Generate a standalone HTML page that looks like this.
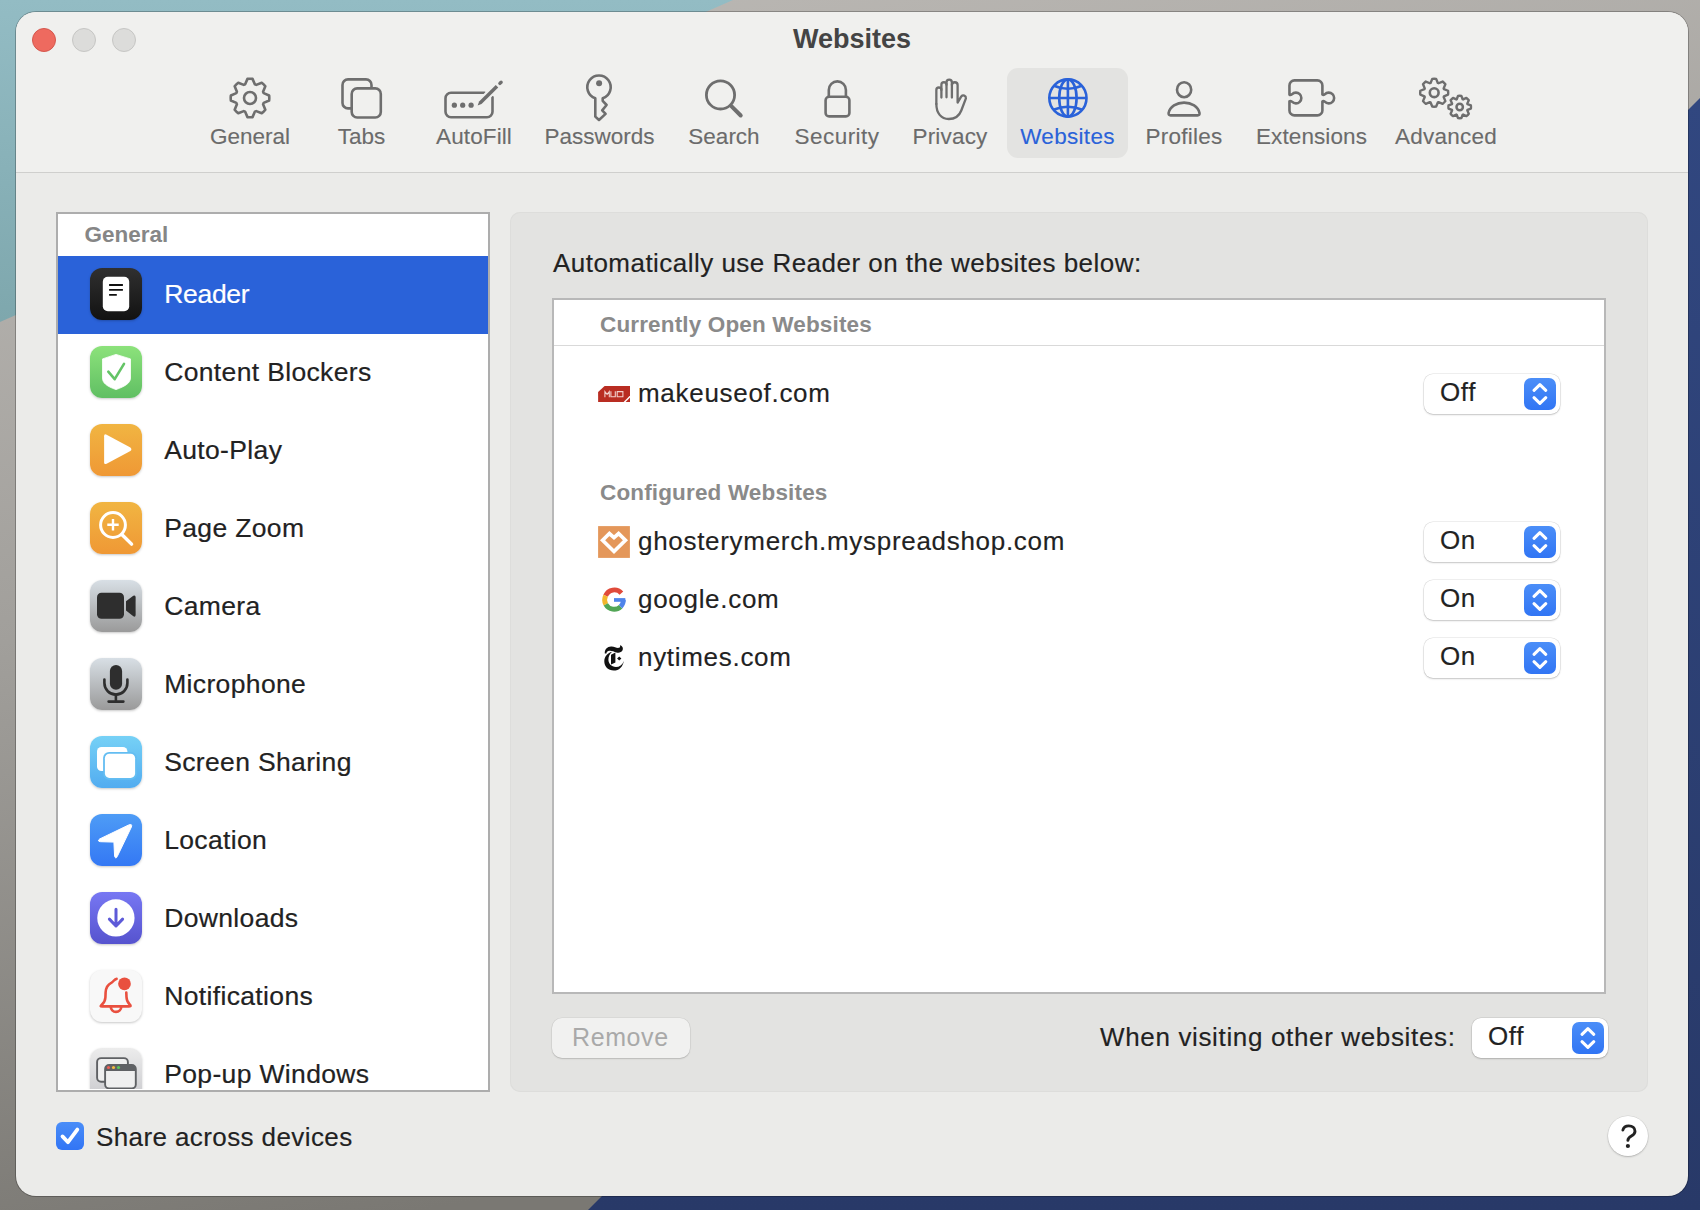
<!DOCTYPE html>
<html><head><meta charset="utf-8">
<style>
*{margin:0;padding:0;box-sizing:border-box}
html,body{width:1700px;height:1210px;overflow:hidden;background:#a5a39f}
body{position:relative;font-family:"Liberation Sans",sans-serif;}
.a{position:absolute}
.t{position:absolute;line-height:1;white-space:nowrap}
#bg{position:absolute;left:0;top:0}
#win{position:absolute;left:16px;top:12px;width:1672px;height:1184px;border-radius:20px;background:#ebebe9;overflow:hidden;box-shadow:0 0 0 1px rgba(0,0,0,0.25)}
#tb{position:absolute;left:0;top:0;width:1672px;height:161px;background:#f0f0ee;border-bottom:1px solid #cfcfcd}
.dot{position:absolute;width:24px;height:24px;border-radius:50%;top:28px}
.lbl{font-size:22.5px;color:#6b6b6b;text-align:center;width:160px;top:125.6px;-webkit-text-stroke:0.12px currentColor}
.side{font-size:26.5px;color:#222;letter-spacing:0.35px;-webkit-text-stroke:0.2px currentColor}
.ico{position:absolute;left:90px;width:52px;height:52px;border-radius:12px;box-shadow:0 1px 2.5px rgba(0,0,0,0.22)}
.site{font-size:26px;color:#222;letter-spacing:0.7px;-webkit-text-stroke:0.15px currentColor}
.pop{position:absolute;width:136px;height:40px;border-radius:9px;background:#fff;box-shadow:0 0 0 0.5px rgba(0,0,0,0.12),0 1px 2px rgba(0,0,0,0.18)}
.pop .st{position:absolute;right:4px;top:4px;width:32px;height:32px;border-radius:7px;background:linear-gradient(#4b8ef8,#3175f4)}
.pop .tx{position:absolute;left:16px;top:5.2px;font-size:26px;line-height:1;color:#222;letter-spacing:0.6px;-webkit-text-stroke:0.15px currentColor}
</style></head><body>
<svg id="bg" width="1700" height="1210">
  <defs>
    <linearGradient id="gg" x1="0" y1="0" x2="0.25" y2="1">
      <stop offset="0" stop-color="#bebbb7"/><stop offset="0.5" stop-color="#a19f9b"/><stop offset="1" stop-color="#7a7873"/>
    </linearGradient>
    <linearGradient id="tg" x1="0" y1="0" x2="0" y2="1">
      <stop offset="0" stop-color="#93bcc4"/><stop offset="1" stop-color="#7ea7ad"/>
    </linearGradient>
  <linearGradient id="bl" x1="0" y1="98" x2="0" y2="1210" gradientUnits="userSpaceOnUse">
      <stop offset="0" stop-color="#314780"/><stop offset="1" stop-color="#283968"/>
    </linearGradient>
  </defs>
  <rect width="1700" height="1210" fill="url(#gg)"/>
  <polygon points="0,0 733,0 0,322" fill="url(#tg)"/>
  <polygon points="588,1210 1700,98 1700,1210" fill="url(#bl)"/>
</svg>
<div id="win">
  <div id="tb"></div>
</div>
<!-- traffic lights -->
<div class="dot" style="left:32px;background:#ee6a5f;border:1px solid #d5574d"></div>
<div class="dot" style="left:72px;background:#dcdcda;border:1px solid #c6c6c4"></div>
<div class="dot" style="left:112px;background:#dcdcda;border:1px solid #c6c6c4"></div>
<div class="t" style="left:652px;width:400px;text-align:center;top:26.1px;font-size:27px;font-weight:bold;color:#444">Websites</div>

<!-- toolbar highlight -->
<div class="a" style="left:1007px;top:68px;width:121px;height:90px;border-radius:11px;background:#e3e3e1"></div>

<svg class="a" style="left:0;top:0" width="1700" height="180" viewBox="0 0 1700 180">
<g fill="none" stroke="#6e6e6e" stroke-width="2.6" stroke-linejoin="round" stroke-linecap="round">
<!-- General gear -->
<path d="M245.16 84.33 L247.48 78.87 A19.30 19.30 0 0 1 252.52 78.87 L254.84 84.33 A14.50 14.50 0 0 1 256.24 84.91 L261.75 82.69 A19.30 19.30 0 0 1 265.31 86.25 L263.09 91.76 A14.50 14.50 0 0 1 263.67 93.16 L269.13 95.48 A19.30 19.30 0 0 1 269.13 100.52 L263.67 102.84 A14.50 14.50 0 0 1 263.09 104.24 L265.31 109.75 A19.30 19.30 0 0 1 261.75 113.31 L256.24 111.09 A14.50 14.50 0 0 1 254.84 111.67 L252.52 117.13 A19.30 19.30 0 0 1 247.48 117.13 L245.16 111.67 A14.50 14.50 0 0 1 243.76 111.09 L238.25 113.31 A19.30 19.30 0 0 1 234.69 109.75 L236.91 104.24 A14.50 14.50 0 0 1 236.33 102.84 L230.87 100.52 A19.30 19.30 0 0 1 230.87 95.48 L236.33 93.16 A14.50 14.50 0 0 1 236.91 91.76 L234.69 86.25 A19.30 19.30 0 0 1 238.25 82.69 L243.76 84.91 A14.50 14.50 0 0 1 245.16 84.33 Z"/>
<circle cx="250" cy="98" r="6"/>
<!-- Tabs -->
<rect x="342.5" y="79.4" width="29" height="29" rx="5.5"/>
<rect x="351.7" y="88.4" width="29.1" height="29.1" rx="5.5" fill="#f0f0ee"/>
<!-- AutoFill -->
<path d="M484.4 92.8 H451 A5.5 5.5 0 0 0 445.5 98.3 V111.8 A5.5 5.5 0 0 0 451 117.3 H487 A5.5 5.5 0 0 0 492.5 111.8 V97.3"/>
<path d="M479 104 L498 85 M500.4 83.3 L501 82.7" stroke="#f0f0ee" stroke-width="7.5"/>
<path d="M477.6 105.5 L479.1 101.56 L495.77 84.96 L498.23 87.44 L481.53 104.04 Z" fill="#6e6e6e" stroke="none"/>
<path d="M499.9 83.4 L501.1 82.2" stroke-width="3.4"/>
<circle cx="454.35" cy="105.2" r="2.6" fill="#6e6e6e" stroke="none"/>
<circle cx="462.7" cy="105.2" r="2.6" fill="#6e6e6e" stroke="none"/>
<circle cx="471.1" cy="105.2" r="2.6" fill="#6e6e6e" stroke="none"/>
<!-- Passwords key -->
<path d="M595.3 98.3 A11.7 11.7 0 1 1 602.7 98.3 V100.8 L606.6 105 L602.2 110.3 L605.6 113.9 L599 120 L595.3 116.6 Z"/>
<circle cx="599.1" cy="83.2" r="3" fill="#6e6e6e" stroke="none"/>
<!-- Search -->
<circle cx="720.5" cy="94.9" r="14.1" stroke-width="2.8"/>
<path d="M731.6 106.4 L740.7 115.5" stroke-width="4"/>
<!-- Security lock -->
<rect x="825.6" y="96.8" width="23.8" height="19.6" rx="3.5"/>
<path d="M828.8 96.8 V89.9 A8.55 8.55 0 0 1 845.9 89.9 V96.8"/>
<!-- Privacy hand -->
<g transform="translate(922 70)" stroke-width="2.3">
<path d="M14.35 34 V20 A2.52 2.52 0 0 1 19.4 20 V27.6"/>
<path d="M19.4 20 V14.8 A2.55 2.55 0 0 1 24.5 14.8 V27.3"/>
<path d="M24.5 14.8 V12.4 A2.7 2.7 0 0 1 29.9 12.4 V27.5"/>
<path d="M29.9 15.1 A2.85 2.85 0 0 1 35.6 15.1 V32.6 L39.3 26.4 A2.6 2.6 0 0 1 43.9 28.3 L39.3 40.5 C37.2 46 32.6 49 26.8 49 C19 49 14.35 43 14.35 34"/>
</g>
<!-- Profiles -->
<ellipse cx="1184.1" cy="89.7" rx="7.1" ry="7.5"/>
<path d="M1170.6 115.4 H1197.6 Q1199.9 115.4 1199.5 112.9 C1198.2 106.6 1191.5 102.6 1184.05 102.6 C1176.6 102.6 1169.9 106.6 1168.6 112.9 Q1168.3 115.4 1170.6 115.4 Z"/>
<!-- Extensions puzzle -->
<path d="M1289.45 24.5" stroke="none"/>
<g transform="translate(1280 70)">
<path d="M9.45 24.6 V15.4 A5 5 0 0 1 14.45 10.35 H37.4 A5 5 0 0 1 42.4 15.4 V24.6 Q43.4 25.4 44.8 24.3 A5.4 5.4 0 1 1 44.8 31.7 Q43.4 30.6 42.4 31.4 V40.4 A5 5 0 0 1 37.4 45.4 H14.45 A5 5 0 0 1 9.45 40.4 V31.4 Q10.5 30.6 12 31.7 A5.4 5.4 0 1 0 12 24.3 Q10.5 25.4 9.45 24.6 Z"/>
</g>
<!-- Advanced gears -->
<path d="M1430.56 82.96 L1432.25 78.84 A14.00 14.00 0 0 1 1436.15 78.84 L1437.84 82.96 A10.40 10.40 0 0 1 1438.51 83.24 L1442.63 81.52 A14.00 14.00 0 0 1 1445.38 84.27 L1443.66 88.39 A10.40 10.40 0 0 1 1443.94 89.06 L1448.06 90.75 A14.00 14.00 0 0 1 1448.06 94.65 L1443.94 96.34 A10.40 10.40 0 0 1 1443.66 97.01 L1445.38 101.13 A14.00 14.00 0 0 1 1442.63 103.88 L1438.51 102.16 A10.40 10.40 0 0 1 1437.84 102.44 L1436.15 106.56 A14.00 14.00 0 0 1 1432.25 106.56 L1430.56 102.44 A10.40 10.40 0 0 1 1429.89 102.16 L1425.77 103.88 A14.00 14.00 0 0 1 1423.02 101.13 L1424.74 97.01 A10.40 10.40 0 0 1 1424.46 96.34 L1420.34 94.65 A14.00 14.00 0 0 1 1420.34 90.75 L1424.46 89.06 A10.40 10.40 0 0 1 1424.74 88.39 L1423.02 84.27 A14.00 14.00 0 0 1 1425.77 81.52 L1429.89 83.24 A10.40 10.40 0 0 1 1430.56 82.96 Z" stroke-width="2.4"/>
<circle cx="1434.2" cy="92.7" r="4.4" stroke-width="2.6"/>
<path d="M1456.73 99.25 L1458.03 95.82 A11.30 11.30 0 0 1 1461.37 95.82 L1462.67 99.25 A8.30 8.30 0 0 1 1463.08 99.42 L1466.42 97.92 A11.30 11.30 0 0 1 1468.78 100.28 L1467.28 103.62 A8.30 8.30 0 0 1 1467.45 104.03 L1470.88 105.33 A11.30 11.30 0 0 1 1470.88 108.67 L1467.45 109.97 A8.30 8.30 0 0 1 1467.28 110.38 L1468.78 113.72 A11.30 11.30 0 0 1 1466.42 116.08 L1463.08 114.58 A8.30 8.30 0 0 1 1462.67 114.75 L1461.37 118.18 A11.30 11.30 0 0 1 1458.03 118.18 L1456.73 114.75 A8.30 8.30 0 0 1 1456.32 114.58 L1452.98 116.08 A11.30 11.30 0 0 1 1450.62 113.72 L1452.12 110.38 A8.30 8.30 0 0 1 1451.95 109.97 L1448.52 108.67 A11.30 11.30 0 0 1 1448.52 105.33 L1451.95 104.03 A8.30 8.30 0 0 1 1452.12 103.62 L1450.62 100.28 A11.30 11.30 0 0 1 1452.98 97.92 L1456.32 99.42 A8.30 8.30 0 0 1 1456.73 99.25 Z" stroke-width="2.4"/>
<circle cx="1459.7" cy="107" r="3.2" stroke-width="2.5"/>
</g>
<!-- Websites globe -->
<g fill="none" stroke="#2a62d9" stroke-width="2.6">
<circle cx="1067.9" cy="98" r="18.6"/>
<ellipse cx="1067.9" cy="98" rx="8.7" ry="18.6"/>
<path d="M1067.9 79.4 V116.6 M1049.3 98 H1086.5"/>
<path d="M1053.9 85.7 Q1067.9 91.8 1081.9 85.7"/>
<path d="M1053.5 109.8 Q1067.9 103.8 1082.3 109.8"/>
</g>
</svg>
<!-- toolbar labels -->
<div class="t lbl" style="left:170px">General</div>
<div class="t lbl" style="left:281.5px">Tabs</div>
<div class="t lbl" style="left:394px;letter-spacing:0.12px">AutoFill</div>
<div class="t lbl" style="left:519.5px">Passwords</div>
<div class="t lbl" style="left:644px">Search</div>
<div class="t lbl" style="left:757px;letter-spacing:0.45px">Security</div>
<div class="t lbl" style="left:870px;letter-spacing:0.17px">Privacy</div>
<div class="t lbl" style="left:987.5px;color:#2a62d9;letter-spacing:0.3px">Websites</div>
<div class="t lbl" style="left:1104px;letter-spacing:0.25px">Profiles</div>
<div class="t lbl" style="left:1231.5px;letter-spacing:0.1px">Extensions</div>
<div class="t lbl" style="left:1366px;letter-spacing:0.25px">Advanced</div>

<!-- sidebar -->
<div class="a" style="left:56px;top:212px;width:434px;height:880px;background:#fff;border:2px solid #adadad"></div>
<div class="t" style="left:84.4px;top:224.2px;font-size:22.5px;font-weight:bold;color:#868686;letter-spacing:0px">General</div>
<div class="a" style="left:58px;top:256px;width:430px;height:78px;background:#2a62d9"></div>

<div class="a" style="left:58px;top:214px;width:430px;height:875px;overflow:hidden">
<div class="a" style="left:-58px;top:-214px;width:1700px;height:1210px">
<div class="ico" style="top:268px;background:linear-gradient(#303030,#121212)"><svg width="52" height="52" viewBox="0 0 52 52">
<rect x="12.8" y="8.8" width="26.4" height="34.4" rx="5" fill="#fff"/>
<path d="M19.1 17 H32.9 M19.1 21.9 H32.9 M19.1 26.9 H26.8" stroke="#111" stroke-width="1.9"/></svg></div>
<div class="ico" style="top:346px;background:linear-gradient(#8ce27b,#60bf63)"><svg width="52" height="52" viewBox="0 0 52 52">
<path d="M26 8.4 L40.5 12.9 V32 C40.5 36.8 35.6 40.2 26 43.6 C16.4 40.2 12.5 36.8 12.5 32 V12.9 Z" fill="#fff" stroke="#fff" stroke-width="0.8" stroke-linejoin="round"/>
<path d="M18.3 25.7 L24.7 33.2 L34 17.8" fill="none" stroke="#64c466" stroke-width="2.6" stroke-linecap="round" stroke-linejoin="round"/></svg></div>
<div class="ico" style="top:424px;background:linear-gradient(#f1b542,#ef9835)"><svg width="52" height="52" viewBox="0 0 52 52">
<path d="M14.1 12.2 Q14.1 9.4 16.6 10.7 L40.4 23.4 Q42.4 25.2 40.4 27 L16.6 39.7 Q14.1 41 14.1 38.2 Z" fill="#fff"/></svg></div>
<div class="ico" style="top:502px;background:linear-gradient(#f1b542,#ef9835)"><svg width="52" height="52" viewBox="0 0 52 52">
<circle cx="23" cy="23" r="12.4" fill="none" stroke="#fff" stroke-width="3"/>
<path d="M17.3 22.8 H28.7 M23 17.1 V28.5" stroke="#fff" stroke-width="2.4"/>
<path d="M32.6 33.2 L41.6 42.1" stroke="#fff" stroke-width="3.4" stroke-linecap="round"/></svg></div>
<div class="ico" style="top:580px;background:linear-gradient(#d8dfe5,#9a9a9a)"><svg width="52" height="52" viewBox="0 0 52 52">
<rect x="7" y="12.8" width="27" height="25.9" rx="4.5" fill="#2e2e2e"/>
<path d="M36 21.2 L43.3 15.8 Q45.6 14.6 45.6 17 V35 Q45.6 37.4 43.3 36.3 L36 30.5 Z" fill="#2e2e2e"/></svg></div>
<div class="ico" style="top:658px;background:linear-gradient(#d8dfe5,#9a9a9a)"><svg width="52" height="52" viewBox="0 0 52 52">
<rect x="19.9" y="7" width="12.2" height="24.8" rx="6.1" fill="#2e2e2e"/>
<path d="M14.4 21.5 V25.1 A11.5 11.5 0 0 0 37.4 25.1 V21.5" fill="none" stroke="#2e2e2e" stroke-width="2.6" stroke-linecap="round"/>
<path d="M25.9 36.6 V43.6 M18.6 43.6 H33.4" stroke="#2e2e2e" stroke-width="2.6" stroke-linecap="round"/></svg></div>
<div class="ico" style="top:736px;background:linear-gradient(#76d1f6,#52acf0)"><svg width="52" height="52" viewBox="0 0 52 52">
<rect x="7" y="10.9" width="30.4" height="24.1" rx="4.5" fill="#fff"/>
<rect x="13.1" y="16" width="33.8" height="27.7" rx="6" fill="#63bdf2"/>
<rect x="14.9" y="17.8" width="30.2" height="24.1" rx="4.5" fill="#fff"/></svg></div>
<div class="ico" style="top:814px;background:linear-gradient(#4e9cf6,#3478f4)"><svg width="52" height="52" viewBox="0 0 52 52">
<path d="M38.6 11 Q42.6 9.4 41.4 13 L27.2 42.6 Q25.6 45.6 24.6 42 L23.9 28.1 L10.4 27.7 Q6.8 27.2 9.6 25 Z" fill="#fff" stroke="#fff" stroke-width="1" stroke-linejoin="round"/></svg></div>
<div class="ico" style="top:892px;background:linear-gradient(#7777f3,#5653ce)"><svg width="52" height="52" viewBox="0 0 52 52">
<circle cx="25.9" cy="25.9" r="18.65" fill="#fff"/>
<path d="M26 17.3 V34 M19.4 27.1 L26 34 L32.6 27.1" fill="none" stroke="#5d5ad8" stroke-width="3" stroke-linecap="round" stroke-linejoin="round"/></svg></div>
<div class="ico" style="top:970px;background:#f8f8f8"><svg width="52" height="52" viewBox="0 0 52 52">
<g transform="translate(-6 -6)"><path d="M32.6 14.9 C30.2 15.1 29.8 17.4 27.6 18.6 C23.6 20.6 21.8 23.6 21.6 28.5 L21.4 33.5 C21.2 37 19.8 38.8 18 40.5 C15.8 42.5 16.5 42.4 18.5 42.4 H45 C47 42.4 47.3 42 45.3 40 C43.6 38.3 42.6 36.5 42.5 33 L42.3 28.6" fill="none" stroke="#e9503f" stroke-width="2.6" stroke-linecap="round" stroke-linejoin="round"/>
<path d="M26.7 42.6 A5.3 5.3 0 0 0 37.3 42.6" fill="none" stroke="#e9503f" stroke-width="2.6"/>
<circle cx="40.5" cy="19.8" r="6.35" fill="#e9503f"/></g></svg></div>
<div class="ico" style="top:1048px;background:linear-gradient(#ececec,#c9c9cd)"><svg width="52" height="52" viewBox="0 0 52 52">
<rect x="7.1" y="10.1" width="30.8" height="23.6" rx="4" fill="#efefef" stroke="#5f6164" stroke-width="1.9"/>
<rect x="15.1" y="16.9" width="30.7" height="23.6" rx="4" fill="#efefef" stroke="#5f6164" stroke-width="1.9"/>
<path d="M15.1 22.9 V21 A4 4 0 0 1 19.1 16.9 H41.8 A4 4 0 0 1 45.8 21 V22.9 Z" fill="#5f6164"/>
<circle cx="18.5" cy="19.5" r="1.6" fill="#ee5f55"/><circle cx="23.5" cy="19.5" r="1.6" fill="#f5bb3f"/><circle cx="28.5" cy="19.5" r="1.6" fill="#5ac85a"/></svg></div>
<div class="t side" style="left:164.2px;top:281.47px;color:#fff;letter-spacing:-0.3px">Reader</div>
<div class="t side" style="left:164.2px;top:359.47px;color:#222">Content Blockers</div>
<div class="t side" style="left:164.2px;top:437.47px;color:#222">Auto-Play</div>
<div class="t side" style="left:164.2px;top:515.47px;color:#222">Page Zoom</div>
<div class="t side" style="left:164.2px;top:593.47px;color:#222">Camera</div>
<div class="t side" style="left:164.2px;top:671.47px;color:#222">Microphone</div>
<div class="t side" style="left:164.2px;top:749.47px;color:#222">Screen Sharing</div>
<div class="t side" style="left:164.2px;top:827.47px;color:#222">Location</div>
<div class="t side" style="left:164.2px;top:905.47px;color:#222">Downloads</div>
<div class="t side" style="left:164.2px;top:983.47px;color:#222">Notifications</div>
<div class="t side" style="left:164.2px;top:1061.47px;color:#222">Pop-up Windows</div>
</div></div>
<!-- right panel -->
<div class="a" style="left:510px;top:212px;width:1138px;height:880px;border-radius:10px;background:#e3e3e1;box-shadow:inset 0 0 0 1px #dddddb"></div>
<div class="t site" style="left:553px;top:250.2px;letter-spacing:0.47px">Automatically use Reader on the websites below:</div>
<div class="a" style="left:552px;top:298px;width:1054px;height:696px;background:#fff;border:2px solid #b8b8b8"></div>
<div class="a" style="left:554px;top:345px;width:1050px;height:1px;background:#d9d9d9"></div>
<div class="t" style="left:600px;top:313.6px;font-size:22.5px;font-weight:bold;color:#8a8a8a;letter-spacing:0.15px">Currently Open Websites</div>
<div class="t" style="left:600px;top:481.6px;font-size:22.5px;font-weight:bold;color:#8a8a8a;letter-spacing:0.15px">Configured Websites</div>

<svg class="a" style="left:590px;top:375px" width="50" height="305" viewBox="590 375 50 305">
<!-- MUO -->
<path d="M598.1 392 L604.6 385.9 H630 V395.4 L623.6 401.9 H598.1 Z" fill="#b92d22"/>
<path d="M630 397.6 V401.9 H625.6 Z" fill="#b92d22"/>
<path d="M604.9 397.2 V391.6 L607.1 394.4 L609.3 391.6 V397.2 M610.9 391.3 V396.7 H615.3 V391.3 M617.2 391.6 H622.9 V396.7 H617.2 Z" fill="none" stroke="#f2cfcb" stroke-width="1.1"/>
<!-- ghostery -->
<rect x="598.1" y="526.1" width="31.8" height="31.8" fill="#e4975a"/>
<path d="M602.6 540.3 L609.4 533.5 L614 537.6 L618.6 533.5 L625.4 540.3 L614 551.5 Z" fill="none" stroke="#fff" stroke-width="3.7" stroke-linejoin="miter"/>
<!-- google -->
<g fill="none" stroke-width="4.9">
<path d="M621.4 593.1 A9.45 9.45 0 0 0 605.6 595.8" stroke="#e04a3a"/>
<path d="M605.6 595.8 A9.45 9.45 0 0 0 605.8 604.4" stroke="#f2b62c"/>
<path d="M605.8 604.4 A9.45 9.45 0 0 0 620.6 606.7" stroke="#52a656"/>
<path d="M620.6 606.7 A9.45 9.45 0 0 0 623.35 599.9" stroke="#4f84ea"/>
</g>
<rect x="614" y="598.1" width="11.3" height="3.7" fill="#4f84ea"/>
<!-- nyt -->
<g transform="translate(596 640)" fill="#111">
<path d="M8.8 13.6 C8.4 9.2 11.6 6.2 15.6 6.5 C18.6 6.8 21 8.4 23 7.8 C24 7.5 24.4 6.4 24 5.2 C26.6 5.8 27.6 8.4 26.4 10.6 C25.2 12.6 22.8 13 20.4 12.4 C18 11.8 15.8 10.6 13.4 10.8 C11.4 11 10.4 12 10.4 13.6 Z"/>
<path d="M16.2 11.8 C11 13 8.3 17 8.3 21.6 C8.3 26.6 12.2 30.6 17.8 30.6 C23 30.6 26.8 27 27.8 21 C26.4 25 23.4 27 20 27 C15.2 27 12.4 23.6 12.4 19.6 C12.4 16.4 13.8 13.8 16.2 11.8 Z"/>
<path d="M15 14.8 L19.4 12.6 V22.6 L15 24.4 Z"/>
<path d="M23.2 16.6 L25.4 18.6 L23.2 20.6 L21.1 18.6 Z"/>
</g>
</svg>
<div class="t site" style="left:638px;top:380px">makeuseof.com</div>
<div class="t site" style="left:638px;top:527.5px">ghosterymerch.myspreadshop.com</div>
<div class="t site" style="left:638px;top:586px">google.com</div>
<div class="t site" style="left:638px;top:643.5px">nytimes.com</div>

<div class="pop" style="left:1424px;top:374px"><div class="tx">Off</div><div class="st"><svg width="32" height="32" viewBox="0 0 32 32" style="position:absolute;left:0;top:0"><path d="M10 12.3 L15.9 6.7 L21.8 12.3 M10 19.7 L15.9 25.3 L21.8 19.7" fill="none" stroke="#fff" stroke-width="3.1" stroke-linecap="round" stroke-linejoin="round"/></svg></div></div>
<div class="pop" style="left:1424px;top:522px"><div class="tx">On</div><div class="st"><svg width="32" height="32" viewBox="0 0 32 32" style="position:absolute;left:0;top:0"><path d="M10 12.3 L15.9 6.7 L21.8 12.3 M10 19.7 L15.9 25.3 L21.8 19.7" fill="none" stroke="#fff" stroke-width="3.1" stroke-linecap="round" stroke-linejoin="round"/></svg></div></div>
<div class="pop" style="left:1424px;top:580px"><div class="tx">On</div><div class="st"><svg width="32" height="32" viewBox="0 0 32 32" style="position:absolute;left:0;top:0"><path d="M10 12.3 L15.9 6.7 L21.8 12.3 M10 19.7 L15.9 25.3 L21.8 19.7" fill="none" stroke="#fff" stroke-width="3.1" stroke-linecap="round" stroke-linejoin="round"/></svg></div></div>
<div class="pop" style="left:1424px;top:638px"><div class="tx">On</div><div class="st"><svg width="32" height="32" viewBox="0 0 32 32" style="position:absolute;left:0;top:0"><path d="M10 12.3 L15.9 6.7 L21.8 12.3 M10 19.7 L15.9 25.3 L21.8 19.7" fill="none" stroke="#fff" stroke-width="3.1" stroke-linecap="round" stroke-linejoin="round"/></svg></div></div>

<!-- bottom of panel -->
<div class="a" style="left:552px;top:1018px;width:138px;height:40px;border-radius:10px;background:#f1f1f0;box-shadow:0 0 0 0.5px rgba(0,0,0,0.08),0 1px 1.5px rgba(0,0,0,0.15)"></div>
<div class="t" style="left:572px;top:1024.8px;font-size:25px;color:#a9a9a9;letter-spacing:0.6px">Remove</div>
<div class="t site" style="left:1100px;top:1023.6px;letter-spacing:0.65px">When visiting other websites:</div>
<div class="pop" style="left:1472px;top:1018px"><div class="tx">Off</div><div class="st"><svg width="32" height="32" viewBox="0 0 32 32" style="position:absolute;left:0;top:0"><path d="M10 12.3 L15.9 6.7 L21.8 12.3 M10 19.7 L15.9 25.3 L21.8 19.7" fill="none" stroke="#fff" stroke-width="3.1" stroke-linecap="round" stroke-linejoin="round"/></svg></div></div>

<!-- checkbox -->
<div class="a" style="left:56px;top:1122px;width:28px;height:28px;border-radius:6px;background:linear-gradient(#4a8df8,#3275f5)"><svg width="28" height="28" viewBox="0 0 28 28"><path d="M6.5 14.4 L12 20.2 L21.3 7.6" fill="none" stroke="#fff" stroke-width="3.8" stroke-linecap="round" stroke-linejoin="round"/></svg></div>
<div class="t site" style="left:96px;top:1124px;letter-spacing:0.4px">Share across devices</div>
<!-- help -->
<div class="a" style="left:1608px;top:1116px;width:40px;height:40px;border-radius:50%;background:#fff;box-shadow:0 0 0 0.5px rgba(0,0,0,0.1),0 1px 2px rgba(0,0,0,0.2)"></div>
<svg class="a" style="left:1600px;top:1110px" width="60" height="50" viewBox="1600 1110 60 50"><path d="M1622.9 1130 C1623.5 1127.5 1625.8 1125.9 1628.8 1125.9 C1632.4 1125.9 1635 1128.2 1635 1131.2 C1635 1133.6 1633.6 1134.8 1631.4 1136.1 C1629.2 1137.4 1627.9 1138.4 1627.9 1140.4" fill="none" stroke="#222" stroke-width="2.9" stroke-linecap="round"/><circle cx="1627.9" cy="1146" r="2.1" fill="#222"/></svg>
</body></html>
